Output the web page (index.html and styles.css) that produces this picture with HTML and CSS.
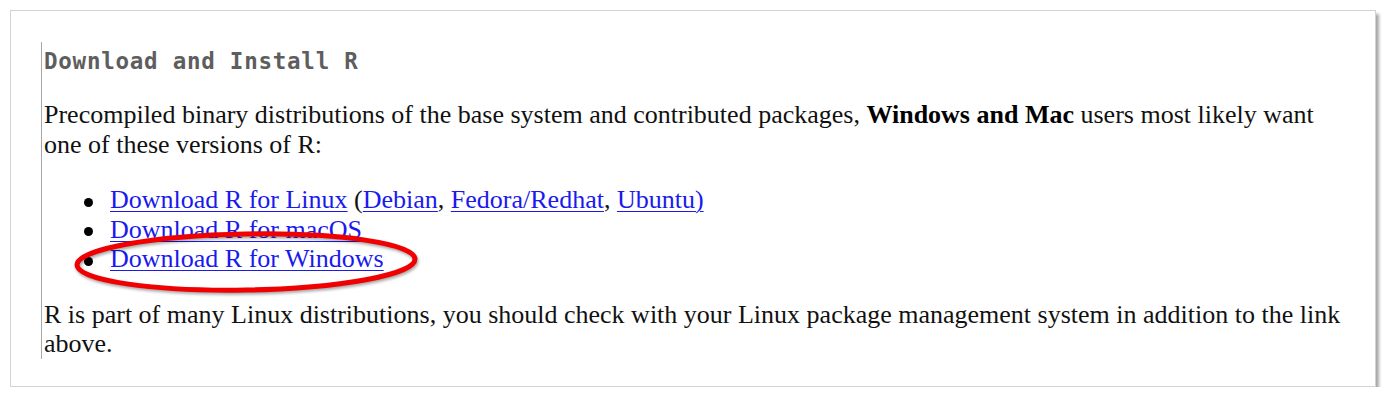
FILE: index.html
```html
<!DOCTYPE html>
<html lang="en">
<head>
<meta charset="utf-8">
<title>Download and Install R</title>
<link rel="stylesheet" href="styles.css">
</head>
<body>
<div class="frame">
  <div class="content">
    <h2 class="title">Download and Install R</h2>
    <p class="text">Precompiled binary distributions of the base system and contributed packages, <b>Windows and Mac</b> users most likely want one of these versions of R:</p>
    <ul class="downloads">
      <li><a href="#">Download R for Linux</a> (<a href="#">Debian</a>, <a href="#">Fedora/Redhat</a>, <a href="#">Ubuntu)</a></li>
      <li><a href="#">Download R for macOS</a></li>
      <li class="marked"><a href="#">Download R for Windows</a>
        <svg class="circle" width="350" height="70" viewBox="0 0 350 70" aria-hidden="true">
          <ellipse cx="174" cy="34" rx="169" ry="28" transform="rotate(-1 174 34)" fill="none" stroke="#f00000" stroke-width="5"/>
        </svg>
      </li>
    </ul>
    <p class="text">R is part of many Linux distributions, you should check with your Linux package management system in addition to the link above.</p>
  </div>
</div>
</body>
</html>
```
FILE: styles.css
```css
html, body {
  margin: 0;
  padding: 0;
  background: #ffffff;
}

.frame {
  margin: 10px 0 0 10px;
  width: 1366px;
  height: 377px;
  box-sizing: border-box;
  border: 1px solid #d2d2d2;
  box-shadow: 3px 4px 3px rgba(0, 0, 0, 0.35);
  padding: 31px 0 0 30px;
  background: #fff;
}

.content {
  border-left: 1px solid #a8a8a8;
  padding-left: 2px;
  width: 1313px;
  font-family: "Liberation Serif", "Times New Roman", serif;
  font-size: 26px;
  line-height: 29.5px;
  color: #111;
}

.title {
  margin: 0;
  padding-top: 4.5px;
  font-family: "DejaVu Sans Mono", Consolas, monospace;
  font-weight: bold;
  font-size: 22.5px;
  letter-spacing: 0.75px;
  line-height: 28px;
  color: #5e5e5e;
}

.text {
  margin: 25.5px 0 0 0;
}

.text b {
  font-weight: bold;
  color: #000;
}

.downloads {
  margin: 26px 0 0 0;
  padding: 0 0 0 66px;
  list-style: none;
}

.downloads li {
  position: relative;
}

.downloads li::before {
  content: "";
  display: inline-block;
  width: 9px;
  height: 9px;
  border-radius: 50%;
  background: #000;
  margin-left: -26.5px;
  margin-right: 17.5px;
  vertical-align: middle;
}

.downloads a {
  color: #1a1aee;
  text-decoration: underline;
  text-decoration-thickness: 1px;
  text-underline-offset: 3px;
}

.downloads + .text {
  margin-top: 26px;
}

.circle {
  position: absolute;
  left: -38px;
  top: -16px;
  filter: drop-shadow(1px 2px 1.5px rgba(0, 0, 0, 0.35));
}
```
